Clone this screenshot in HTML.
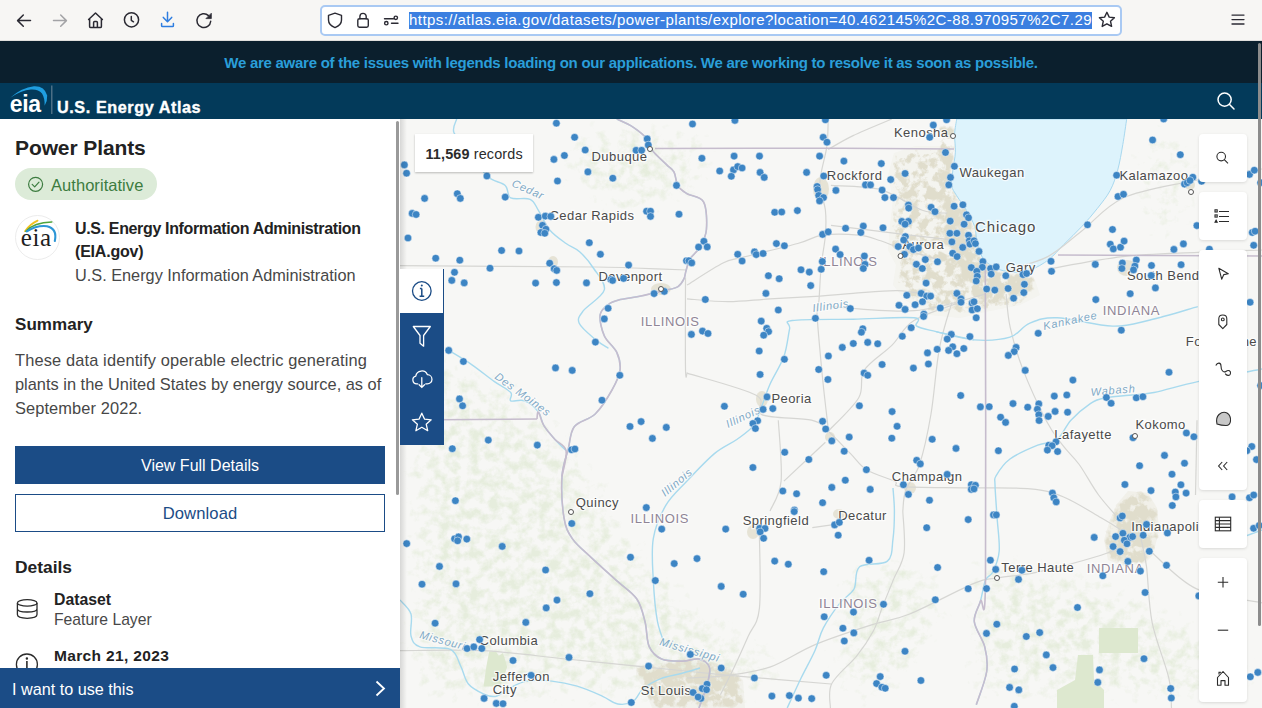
<!DOCTYPE html>
<html><head><meta charset="utf-8">
<style>
*{box-sizing:border-box;margin:0;padding:0}
html,body{width:1262px;height:708px;overflow:hidden;background:#fff;font-family:"Liberation Sans",sans-serif}
.t{position:absolute;white-space:nowrap}
.a{position:absolute}
svg{position:absolute;overflow:visible}
</style></head><body>
<div class="a" style="left:0;top:0;width:1262px;height:41px;background:#f7f6f4"></div><div class="a" style="left:0;top:40px;width:1262px;height:1px;background:#e0dfdd"></div><svg style="left:0;top:0" width="260" height="41" viewBox="0 0 260 41" fill="none" stroke="#2b2a33" stroke-width="1.5" stroke-linecap="round" stroke-linejoin="round">
<path d="M30.5 20.6H17.8M23.3 15L17.6 20.6L23.3 26.2"/>
<path d="M53.5 20.6H66.2M60.7 15L66.4 20.6L60.7 26.2" stroke="#a3a3a6"/>
<path d="M88.6 19.5L95.5 13L102.4 19.5M89.6 18.7V26.4Q89.6 27.6 90.8 27.6H100.2Q101.4 27.6 101.4 26.4V18.7M93.6 27.6V22.4Q93.6 21.4 94.6 21.4H96.4Q97.4 21.4 97.4 22.4V27.6"/>
<circle cx="131.5" cy="19.8" r="7.1"/>
<path d="M131.3 16.4V20.3L133.5 21.8"/>
<path d="M167.5 12.3V21.5M163.3 17.4L167.5 21.7L171.7 17.4M161.6 23.4V25.7Q161.6 26.6 162.5 26.6H172.5Q173.4 26.6 173.4 25.7V23.4" stroke="#2e7de0"/>
<path d="M210.7 21.2A6.9 6.9 0 1 1 208.5 15.6"/>
<path d="M211.3 13.6V18.6H206.3Z" fill="#2b2a33" stroke-width="0.8"/>
</svg><div class="a" style="left:320px;top:5px;width:802px;height:31px;background:#fff;border:2px solid #a9c9f3;border-radius:5px"></div><svg style="left:300px;top:0" width="120" height="41" viewBox="300 0 120 41" fill="none" stroke="#2b2a33" stroke-width="1.4" stroke-linecap="round" stroke-linejoin="round">
<path d="M335 13.2L341.5 15.3V20Q341.5 25 335 27.6Q328.5 25 328.5 20V15.3Z"/>
<rect x="357.8" y="18.7" width="10.5" height="8.5" rx="1.6"/>
<path d="M359.9 18.7V16.5A3.1 3.1 0 0 1 366.2 16.5V18.7"/>
<path d="M393.5 18.8H384.5M391.5 23.3H398"/>
<circle cx="395.8" cy="17.8" r="1.7"/><circle cx="386.3" cy="23.2" r="1.7"/>
</svg><div class="a" style="left:409px;top:12px;width:683px;height:17px;background:#3b7fe0"></div><div class="t" style="left:409px;top:11px;height:18px;font-size:15px;line-height:18px;color:#fff;letter-spacing:0.44px">https://atlas.eia.gov/datasets/power-plants/explore?location=40.462145%2C-88.970957%2C7.29</div><svg style="left:1090px;top:0" width="172" height="41" viewBox="1090 0 172 41" fill="none" stroke="#2b2a33" stroke-width="1.4" stroke-linejoin="round" stroke-linecap="round">
<path d="M1106.9 12.3L1109.2 17.1L1114.4 17.7L1110.5 21.2L1111.6 26.4L1106.9 23.8L1102.2 26.4L1103.3 21.2L1099.4 17.7L1104.6 17.1Z"/>
<path d="M1232 15.1H1244M1232 19.6H1244M1232 24H1244" stroke-width="1.3"/>
</svg><div class="a" style="left:0;top:41px;width:1262px;height:42px;background:#0b1f2d"></div><div class="t" style="left:0px;top:55.10px;font-size:15px;line-height:15px;color:#2a9ed9;font-weight:bold;letter-spacing:-0.265px;width:1262px;text-align:center;">We are aware of the issues with legends loading on our applications. We are working to resolve it as soon as possible.</div>
<div class="a" style="left:0;top:83px;width:1262px;height:36px;background:#033a5a"></div><svg style="left:0;top:83px" width="60" height="36" viewBox="0 83 60 36">
<path d="M10.2 97.8Q22 87.5 33.9 86.3Q44.5 85.8 47.2 95.5Q47.6 100.5 44.6 105.7Q45 98.5 42 93.5Q38.5 89.2 31 89.6Q21 90.5 10.2 97.8Z" fill="#1f9ee0"/>
<rect x="51.2" y="85.5" width="1.2" height="28.5" fill="#5f7d91"/>
</svg><div class="t" style="left:9.8px;top:93.33px;font-size:23px;line-height:23px;color:#fff;font-weight:bold;letter-spacing:-0.4px;">eia</div>
<div class="t" style="left:57px;top:99.19px;font-size:16.2px;line-height:16.2px;color:#fff;font-weight:bold;letter-spacing:0.58px;-webkit-text-stroke:0.35px #fff;">U.S. Energy Atlas</div>
<svg style="left:1210px;top:86px" width="30" height="30" viewBox="1210 86 30 30" fill="none" stroke="#fff" stroke-width="1.5">
<circle cx="1224.6" cy="99.6" r="6.6"/><path d="M1229.3 104.3L1234 109" stroke-linecap="round"/>
</svg><svg style="left:400px;top:119px" width="862" height="589" viewBox="400 119 862 589" font-family="Liberation Sans, sans-serif"><defs><clipPath id="mc"><rect x="400" y="119" width="862" height="589"/></clipPath></defs><g clip-path="url(#mc)"><defs>
<filter id="speck" x="400" y="119" width="862" height="589" filterUnits="userSpaceOnUse" color-interpolation-filters="sRGB">
<feTurbulence type="fractalNoise" baseFrequency="0.11" numOctaves="4" seed="7" result="n"/>
<feColorMatrix in="n" type="matrix" values="0 0 0 0 0  0 0 0 0 0  0 0 0 0 0  1 0 0 0 0" result="na"/>
<feGaussianBlur in="SourceAlpha" stdDeviation="6" result="m"/>
<feComposite in="na" in2="m" operator="arithmetic" k1="1" k2="0" k3="0" k4="0" result="nm"/>
<feComponentTransfer in="nm" result="t"><feFuncA type="linear" slope="6" intercept="-2.5"/></feComponentTransfer>
<feFlood flood-color="#e0ddcc"/>
<feComposite in2="t" operator="in"/>
</filter>
<filter id="speck2" x="400" y="119" width="862" height="589" filterUnits="userSpaceOnUse" color-interpolation-filters="sRGB">
<feTurbulence type="fractalNoise" baseFrequency="0.11" numOctaves="4" seed="3" result="n"/>
<feColorMatrix in="n" type="matrix" values="0 0 0 0 0  0 0 0 0 0  0 0 0 0 0  1 0 0 0 0" result="na"/>
<feGaussianBlur in="SourceAlpha" stdDeviation="5" result="m"/>
<feComposite in="na" in2="m" operator="arithmetic" k1="1" k2="0" k3="0" k4="0" result="nm"/>
<feComponentTransfer in="nm" result="t"><feFuncA type="linear" slope="6" intercept="-1.7"/></feComponentTransfer>
<feFlood flood-color="#e0ddcc"/>
<feComposite in2="t" operator="in"/>
</filter>
<filter id="gtex" filterUnits="userSpaceOnUse" x="400" y="119" width="862" height="589" color-interpolation-filters="sRGB">
<feTurbulence type="fractalNoise" baseFrequency="0.1" numOctaves="4" seed="11" result="n"/>
<feColorMatrix in="n" type="matrix" values="0 0 0 0 0  0 0 0 0 0  0 0 0 0 0  1 0 0 0 0" result="na"/>
<feGaussianBlur in="SourceAlpha" stdDeviation="25" result="m"/>
<feComposite in="na" in2="m" operator="arithmetic" k1="1" k2="0" k3="0" k4="0" result="nm"/>
<feComponentTransfer in="nm" result="t"><feFuncA type="linear" slope="3" intercept="-1.15"/></feComponentTransfer>
<feFlood flood-color="#e6eddd"/>
<feComposite in2="t" operator="in"/>
</filter>
</defs>
<rect x="400" y="119" width="862" height="589" fill="#f7f7f5"/>
<polygon points="400.0,330.0 520.0,380.0 560.0,420.0 600.0,460.0 640.0,540.0 700.0,600.0 780.0,640.0 800.0,708.0 400.0,708.0" fill="#000" filter="url(#gtex)"/>
<polygon points="960.0,540.0 1060.0,560.0 1130.0,580.0 1200.0,620.0 1262.0,640.0 1262.0,708.0 960.0,708.0" fill="#000" filter="url(#gtex)"/>
<polygon points="550.0,119.0 720.0,119.0 720.0,200.0 620.0,230.0 550.0,180.0" fill="#000" filter="url(#gtex)"/>
<polygon points="830.0,560.0 930.0,540.0 960.0,620.0 900.0,708.0 820.0,708.0" fill="#000" filter="url(#gtex)"/>
<polygon points="1130.0,119.0 1197.0,119.0 1197.0,260.0 1130.0,240.0" fill="#000" filter="url(#gtex)"/>
<polygon points="1099.0,628.0 1138.0,628.0 1138.0,653.0 1099.0,653.0" fill="#dde8cf"/>
<polygon points="1078.0,655.0 1093.0,655.0 1094.0,680.0 1104.0,690.0 1104.0,708.0 1057.0,708.0 1057.0,690.0 1075.0,680.0" fill="#dde8cf"/>
<polygon points="489.1,651.6 496.0,651.6 498.8,655.8 503.0,653.0 507.2,666.9 500.2,686.4 483.5,686.4 486.3,666.9" fill="#dde8cf"/>
<polygon points="894.0,153.0 915.0,146.0 952.0,146.0 954.0,160.0 952.0,185.0 957.0,196.0 967.0,211.0 975.0,226.0 978.0,242.0 983.0,257.0 990.0,265.0 1000.0,270.0 1015.0,273.0 1035.0,280.0 1040.0,295.0 1020.0,305.0 985.0,312.0 960.0,318.0 930.0,315.0 905.0,300.0 893.0,285.0 896.0,265.0 888.0,250.0 890.0,225.0 893.0,200.0 888.0,175.0" fill="#dedac8" opacity="0.12"/>
<polygon points="894.0,153.0 915.0,146.0 952.0,146.0 954.0,160.0 952.0,185.0 957.0,196.0 967.0,211.0 975.0,226.0 978.0,242.0 983.0,257.0 990.0,265.0 1000.0,270.0 1015.0,273.0 1035.0,280.0 1040.0,295.0 1020.0,305.0 985.0,312.0 960.0,318.0 930.0,315.0 905.0,300.0 893.0,285.0 896.0,265.0 888.0,250.0 890.0,225.0 893.0,200.0 888.0,175.0" fill="#000" filter="url(#speck)"/>
<polygon points="940.0,122.0 954.0,122.0 955.0,150.0 952.0,185.0 957.0,196.0 967.0,211.0 975.0,226.0 978.0,242.0 983.0,257.0 992.0,266.0 1005.0,272.0 1030.0,273.0 1038.0,285.0 1030.0,298.0 1000.0,303.0 975.0,298.0 958.0,282.0 948.0,258.0 942.0,228.0 940.0,195.0 938.0,160.0" fill="#000" filter="url(#speck2)"/>
<polygon points="1128.0,491.0 1148.0,493.0 1157.0,508.0 1159.0,530.0 1153.0,555.0 1145.0,563.0 1125.0,566.0 1108.0,560.0 1104.0,540.0 1110.0,520.0 1117.0,504.0" fill="#dedac8" opacity="0.25"/>
<polygon points="1128.0,491.0 1148.0,493.0 1157.0,508.0 1159.0,530.0 1153.0,555.0 1145.0,563.0 1125.0,566.0 1108.0,560.0 1104.0,540.0 1110.0,520.0 1117.0,504.0" fill="#000" filter="url(#speck2)"/>
<polygon points="636.0,666.0 654.1,664.0 672.9,661.0 685.5,657.0 698.0,658.0 712.0,662.0 730.0,668.0 743.0,680.0 745.0,708.0 652.0,708.0 645.0,689.7 636.0,677.1" fill="#dedac8" opacity="0.2"/>
<polygon points="636.0,666.0 654.1,664.0 672.9,661.0 685.5,657.0 698.0,658.0 712.0,662.0 730.0,668.0 743.0,680.0 745.0,708.0 652.0,708.0 645.0,689.7 636.0,677.1" fill="#000" filter="url(#speck2)"/>
<ellipse cx="762" cy="399" rx="6" ry="8" fill="#dedac8" opacity="0.7"/>
<ellipse cx="830" cy="437" rx="5" ry="5" fill="#dedac8" opacity="0.7"/>
<ellipse cx="839" cy="514" rx="6" ry="5" fill="#dedac8" opacity="0.7"/>
<ellipse cx="753" cy="532" rx="6" ry="7" fill="#dedac8" opacity="0.7"/>
<ellipse cx="910" cy="488" rx="6" ry="6" fill="#dedac8" opacity="0.7"/>
<ellipse cx="821" cy="189" rx="8" ry="12" fill="#dedac8" opacity="0.7"/>
<ellipse cx="1127" cy="268" rx="10" ry="8" fill="#dedac8" opacity="0.7"/>
<ellipse cx="661" cy="289" rx="10" ry="6" fill="#dedac8" opacity="0.7"/>
<ellipse cx="553" cy="262" rx="5" ry="6" fill="#dedac8" opacity="0.7"/>
<ellipse cx="541.5" cy="227" rx="6" ry="7" fill="#dedac8" opacity="0.7"/>
<ellipse cx="1190" cy="185" rx="5" ry="5" fill="#dedac8" opacity="0.7"/>
<path d="M956.7,119.0 C956.4,121.5 954.8,128.8 954.6,134.3 C954.4,139.8 955.7,146.2 955.4,152.2 C955.1,158.2 953.5,164.5 952.9,170.1 C952.3,175.7 951.0,181.2 951.6,185.5 C952.2,189.8 954.2,191.4 956.7,195.7 C959.2,199.9 963.9,205.9 966.9,211.0 C969.9,216.1 972.9,221.3 974.6,226.4 C976.3,231.5 975.8,236.6 977.1,241.7 C978.4,246.8 980.1,253.2 982.2,257.0 C984.3,260.8 986.9,262.6 989.9,264.7 C992.9,266.8 995.8,268.5 1000.1,269.8 C1004.4,271.1 1010.4,272.4 1015.5,272.4 C1020.6,272.4 1025.3,271.9 1030.8,269.8 C1036.3,267.7 1043.2,263.9 1048.7,259.6 C1054.2,255.4 1058.5,249.8 1064.0,244.3 C1069.5,238.8 1076.4,232.4 1081.9,226.4 C1087.5,220.4 1092.6,214.5 1097.3,208.5 C1102.0,202.5 1106.7,197.0 1110.1,190.6 C1113.5,184.2 1115.6,177.8 1117.7,170.1 C1119.8,162.4 1121.3,153.1 1122.8,144.6 C1124.3,136.1 1126.0,123.3 1126.7,119.0 Z" fill="#ddf3fc" stroke="#a8d8ef" stroke-width="1"/>
<path d="M400.0,265.7 C432.6,265.9 557.0,266.6 595.9,267.0 C634.8,267.4 618.2,267.5 633.4,268.0 C648.6,268.5 678.1,269.7 687.0,270.0" fill="none" stroke="#d6d6d3" stroke-width="1.2"/>
<path d="M687.0,285.1 C693.0,281.4 713.8,267.6 723.0,263.0 C732.2,258.4 729.9,260.6 742.4,257.4 C754.9,254.1 784.3,247.2 797.7,243.5 C811.1,239.8 812.5,236.6 822.6,235.2 C832.8,233.8 848.9,234.3 858.6,235.2 C868.3,236.1 873.3,238.5 880.7,240.8 C888.1,243.1 893.0,245.9 902.9,249.1 C912.8,252.3 933.8,258.2 940.0,260.0" fill="none" stroke="#d6d6d3" stroke-width="1.2"/>
<path d="M687.0,298.9 C693.9,299.4 714.7,301.7 728.5,301.7 C742.3,301.7 754.8,299.8 770.0,298.9 C785.2,298.0 806.0,297.0 819.9,296.1 C833.8,295.2 840.2,294.3 853.1,293.4 C866.0,292.5 884.6,290.3 897.4,290.6 C910.2,290.9 924.6,294.3 930.0,295.0" fill="none" stroke="#d6d6d3" stroke-width="1.2"/>
<path d="M685.5,277.4 C685.5,292.7 685.2,353.2 685.5,369.1 C685.8,385.0 686.8,372.4 687.0,373.0" fill="none" stroke="#d6d6d3" stroke-width="1.2"/>
<path d="M828.2,119.0 C828.0,123.6 828.2,136.1 826.8,146.7 C825.4,157.3 820.1,172.1 819.9,182.7 C819.7,193.3 824.5,201.6 825.4,210.3 C826.3,219.1 826.1,226.0 825.4,235.2 C824.7,244.4 822.3,254.9 821.2,265.7 C820.1,276.5 819.7,291.8 819.0,300.0 C818.3,308.2 816.5,301.9 817.1,315.0 C817.7,328.1 820.8,359.8 822.6,378.7 C824.5,397.6 827.3,420.2 828.2,428.5" fill="none" stroke="#d6d6d3" stroke-width="1.2"/>
<path d="M828.2,149.4 C832.4,147.1 842.5,140.7 853.1,135.6 C863.7,130.5 885.3,121.8 891.8,119.0" fill="none" stroke="#d6d6d3" stroke-width="1.2"/>
<path d="M830.9,185.4 C839.2,186.1 865.5,185.4 880.7,189.6 C895.9,193.8 911.2,206.4 922.3,210.3 C933.4,214.2 943.1,212.6 947.2,213.1" fill="none" stroke="#d6d6d3" stroke-width="1.2"/>
<path d="M831.0,225.3 C842.1,226.7 877.6,231.2 897.7,233.6 C917.9,236.0 942.9,238.8 951.9,239.9" fill="none" stroke="#d6d6d3" stroke-width="1.2"/>
<path d="M831.0,306.6 C844.9,307.3 888.7,312.8 914.4,310.7 C940.1,308.6 973.4,296.9 985.2,294.1" fill="none" stroke="#d6d6d3" stroke-width="1.2"/>
<path d="M1010.2,269.1 C1016.5,267.0 1036.0,262.9 1047.8,256.6 C1059.6,250.3 1068.6,241.2 1081.1,231.5 C1093.6,221.8 1104.7,206.5 1122.8,198.2 C1140.9,189.9 1166.3,186.4 1189.5,181.5 C1212.7,176.6 1249.9,171.1 1262.0,169.0" fill="none" stroke="#d6d6d3" stroke-width="1.2"/>
<path d="M1047.8,269.1 C1060.3,267.0 1097.8,259.4 1122.8,256.6 C1147.8,253.8 1174.6,253.5 1197.8,252.4 C1221.0,251.3 1251.3,250.4 1262.0,250.0" fill="none" stroke="#d6d6d3" stroke-width="1.2"/>
<path d="M1006.1,294.1 C1006.8,299.7 1007.4,314.9 1010.2,327.4 C1013.0,339.9 1016.8,353.6 1022.8,369.1 C1028.8,384.6 1039.4,407.5 1046.0,420.2 C1052.6,432.9 1057.1,437.8 1062.6,445.2 C1068.1,452.6 1073.2,456.2 1079.2,464.5 C1085.2,472.8 1091.5,485.4 1098.6,495.0 C1105.7,504.6 1117.8,517.5 1121.7,522.0" fill="none" stroke="#d6d6d3" stroke-width="1.2"/>
<path d="M951.9,302.4 C949.8,310.0 942.9,329.7 939.4,348.3 C935.9,366.9 934.3,394.6 931.0,414.0 C927.7,433.4 923.7,451.8 919.5,464.5 C915.3,477.2 908.6,482.2 905.8,490.0 C903.0,497.8 903.3,507.5 902.8,511.0" fill="none" stroke="#d6d6d3" stroke-width="1.2"/>
<path d="M687.0,373.1 C698.5,376.8 743.8,388.4 756.2,395.3 C768.7,402.2 752.5,410.5 761.7,414.6 C770.9,418.8 800.4,417.4 811.5,420.2 C822.6,423.0 821.7,425.7 828.2,431.2 C834.7,436.7 843.8,446.9 850.3,453.4 C856.8,459.9 859.5,465.4 866.9,470.0 C874.3,474.6 888.8,478.3 894.6,481.1 C900.4,483.9 889.4,485.6 901.6,486.7 C913.8,487.8 946.5,487.5 968.0,487.9 C989.5,488.2 1014.4,487.3 1030.3,488.8 C1046.2,490.3 1051.8,492.2 1063.6,497.0 C1075.4,501.8 1091.3,512.2 1101.0,517.8 C1110.7,523.3 1118.2,528.2 1121.7,530.3" fill="none" stroke="#d6d6d3" stroke-width="1.2"/>
<path d="M828.2,431.2 C833.3,425.7 852.6,408.1 858.6,398.0 C864.6,387.9 858.6,379.2 864.1,370.4 C869.6,361.6 883.5,353.7 891.8,345.4 C900.1,337.1 902.6,327.7 914.0,320.5 C925.4,313.3 952.5,305.4 960.2,302.4" fill="none" stroke="#d6d6d3" stroke-width="1.2"/>
<path d="M778.3,420.2 C778.8,430.4 782.5,466.0 781.1,481.1 C779.7,496.2 771.9,506.0 770.0,511.0" fill="none" stroke="#d6d6d3" stroke-width="1.2"/>
<path d="M825.4,442.3 L783.9,481.1" fill="none" stroke="#d6d6d3" stroke-width="1.2"/>
<path d="M902.8,511.0 C903.0,518.0 905.7,541.2 904.1,552.8 C902.5,564.4 896.7,571.3 893.0,580.6 C889.3,589.9 885.1,600.0 881.9,608.4 C878.6,616.8 877.7,622.8 873.5,630.7 C869.3,638.6 863.8,647.0 856.8,655.8 C849.8,664.6 836.2,674.9 831.8,683.6 C827.4,692.3 830.6,703.9 830.4,708.0" fill="none" stroke="#d6d6d3" stroke-width="1.2"/>
<path d="M759.4,533.3 C759.4,545.8 761.3,591.2 759.4,608.4 C757.5,625.6 752.4,626.5 748.2,636.3 C744.0,646.0 738.9,657.2 734.3,666.9 C729.7,676.6 722.7,690.1 720.4,694.7" fill="none" stroke="#d6d6d3" stroke-width="1.2"/>
<path d="M687.0,678.0 C694.0,677.5 714.9,677.1 728.8,675.3 C742.7,673.4 756.1,672.0 770.5,666.9 C784.9,661.8 798.4,651.6 815.1,644.6 C831.8,637.6 854.9,630.2 870.7,625.1 C886.5,620.0 892.5,621.0 909.7,614.0 C926.9,607.0 959.4,589.4 974.0,583.4 C988.6,577.4 986.3,579.9 997.1,578.0 C1007.9,576.1 1021.3,575.6 1038.6,571.8 C1055.9,568.0 1087.2,559.4 1101.0,555.2 C1114.8,551.1 1118.2,548.3 1121.7,546.9" fill="none" stroke="#d6d6d3" stroke-width="1.2"/>
<path d="M812.3,527.7 L831.8,524.9" fill="none" stroke="#d6d6d3" stroke-width="1.2"/>
<path d="M400.0,650.7 C413.8,650.7 455.3,649.3 483.0,650.7 C510.7,652.1 538.3,656.2 566.0,659.0 C593.7,661.8 628.2,665.2 649.0,667.3 C669.8,669.4 676.8,670.1 690.7,671.5 C704.6,672.9 708.8,673.5 732.2,675.6 C755.6,677.7 814.5,682.6 831.0,684.0" fill="none" stroke="#d6d6d3" stroke-width="1.2"/>
<path d="M1141.0,538.8 C1141.9,543.4 1144.7,552.7 1146.5,566.6 C1148.3,580.5 1148.4,603.7 1152.1,622.3 C1155.8,640.9 1165.6,663.7 1168.8,678.0 C1172.0,692.3 1171.0,703.0 1171.5,708.0" fill="none" stroke="#d6d6d3" stroke-width="1.2"/>
<path d="M1152.1,552.7 C1159.5,558.7 1178.3,580.5 1196.6,588.9 C1214.9,597.2 1251.1,600.5 1262.0,602.8" fill="none" stroke="#d6d6d3" stroke-width="1.2"/>
<path d="M1197.0,420.2 L1195.5,495.0" fill="none" stroke="#d6d6d3" stroke-width="1.2"/>
<path d="M616.8,119.0 C619.6,120.4 628.2,123.8 633.4,127.3 C638.6,130.8 644.9,136.0 648.0,139.8 C651.1,143.6 649.1,146.1 652.2,150.3 C655.3,154.5 663.2,161.3 666.8,164.9 C670.4,168.5 672.1,168.5 674.0,172.0 C675.9,175.5 675.8,182.4 678.0,186.0 C680.2,189.6 682.7,191.0 687.0,193.7 C691.3,196.4 700.4,196.0 703.6,202.0 C706.8,208.0 707.0,222.2 706.4,229.7 C705.8,237.2 702.7,242.1 700.0,247.0 C697.3,251.9 692.3,255.0 690.0,259.0 C687.7,263.0 687.0,267.5 686.0,270.8 C685.0,274.1 685.3,276.1 684.0,278.7 C682.7,281.3 681.3,284.6 678.0,286.6 C674.7,288.6 670.8,289.0 664.2,290.6 C657.6,292.2 646.1,294.9 638.5,296.5 C630.9,298.1 623.7,298.7 618.7,300.0 C613.7,301.3 611.5,302.0 608.4,304.5 C605.3,307.0 600.8,309.7 600.1,314.9 C599.4,320.1 601.5,329.6 604.3,335.8 C607.1,342.1 614.2,346.6 616.8,352.4 C619.4,358.2 620.8,364.1 620.0,370.4 C619.2,376.7 616.1,382.7 612.0,390.0 C607.9,397.3 601.5,407.9 595.2,414.0 C588.9,420.1 578.9,420.6 574.4,426.5 C569.9,432.4 570.3,441.0 568.2,449.3 C566.1,457.6 562.7,464.9 562.0,476.3 C561.3,487.7 562.3,507.4 564.0,517.8 C565.7,528.2 567.8,532.0 572.3,538.6 C576.8,545.2 583.7,550.4 591.0,557.3 C598.3,564.2 608.4,573.2 616.0,580.1 C623.6,587.0 631.9,591.9 636.7,598.8 C641.5,605.7 642.9,613.6 645.0,621.6 C647.1,629.6 646.4,640.4 649.2,646.6 C652.0,652.8 656.1,656.6 661.6,659.0 C667.1,661.4 676.2,661.1 682.4,661.1 C688.6,661.1 694.5,658.0 699.0,659.0 C703.5,660.0 708.0,663.1 709.4,667.3 C710.8,671.5 709.0,677.2 707.3,684.0 C705.6,690.8 700.4,704.0 699.0,708.0" fill="none" stroke="#a8daee" stroke-width="1.4"/>
<path d="M974.0,339.9 C967.7,338.5 945.6,333.9 936.1,331.6 C926.6,329.3 920.4,328.4 916.7,326.1 C913.0,323.8 924.6,319.0 914.0,317.8 C903.4,316.6 873.4,318.8 853.1,319.2 C832.8,319.6 802.8,318.9 792.2,320.5 C781.6,322.1 791.0,322.8 789.6,328.8 C788.2,334.8 787.2,347.3 783.9,356.5 C780.6,365.7 773.7,375.9 770.0,384.2 C766.3,392.5 764.5,399.4 761.7,406.3 C758.9,413.2 757.5,420.2 753.4,425.7 C749.2,431.2 743.2,434.9 736.8,439.5 C730.3,444.1 723.0,446.5 714.7,453.4 C706.4,460.3 695.1,472.4 687.0,481.1 C678.9,489.8 671.4,495.8 665.8,505.4 C660.2,515.0 655.4,526.1 653.3,538.6 C651.2,551.1 652.6,566.3 653.3,580.1 C654.0,593.9 655.4,610.5 657.5,621.6 C659.6,632.7 664.4,642.4 665.8,646.6" fill="none" stroke="#a8daee" stroke-width="1.4"/>
<path d="M400.0,600.0 C401.8,602.3 409.2,608.0 411.0,614.0 C412.8,620.0 409.5,630.5 411.0,636.0 C412.5,641.5 413.4,644.7 420.0,646.9 C426.6,649.1 443.6,646.2 450.4,649.4 C457.2,652.6 457.6,660.2 460.6,665.9 C463.6,671.6 464.4,679.1 468.2,683.7 C472.0,688.4 478.8,691.7 483.4,693.8 C488.0,695.9 491.9,697.1 496.1,696.3 C500.3,695.4 503.6,691.2 508.7,688.7 C513.8,686.2 519.3,682.4 526.5,681.1 C533.7,679.8 543.3,680.2 551.8,681.1 C560.2,682.0 568.7,683.7 577.2,686.2 C585.7,688.7 595.8,693.3 602.6,696.3 C609.4,699.3 612.7,703.1 617.8,704.0 C622.9,704.9 628.8,703.9 633.0,701.4 C637.2,698.9 638.5,692.5 643.1,688.7 C647.8,684.9 654.5,681.1 660.9,678.6 C667.2,676.1 674.7,675.3 681.2,673.5 C687.7,671.7 696.9,668.9 700.0,668.0" fill="none" stroke="#a8daee" stroke-width="1.4"/>
<path d="M448.7,350.4 C452.6,352.8 464.4,359.6 472.0,364.8 C479.6,370.0 487.7,376.8 494.1,381.4 C500.6,386.0 507.9,389.3 510.7,392.5 C513.5,395.7 508.4,399.4 510.7,400.8 C513.0,402.2 519.9,399.0 524.5,400.8 C529.1,402.6 535.2,407.8 538.4,411.9 C541.6,416.0 541.1,421.1 543.9,425.7 C546.7,430.3 551.3,435.4 555.0,439.5 C558.7,443.6 564.2,448.8 566.1,450.6" fill="none" stroke="#a8daee" stroke-width="1.4"/>
<path d="M456.7,119.0 C456.2,121.3 451.8,127.6 454.0,132.8 C456.2,138.0 464.5,142.8 470.0,150.0 C475.5,157.2 481.0,170.1 486.9,176.0 C492.8,181.9 501.2,181.8 505.2,185.4 C509.2,189.1 506.5,195.6 510.7,197.9 C514.9,200.2 525.5,197.2 530.1,199.3 C534.7,201.4 535.2,205.2 538.4,210.3 C541.6,215.4 544.9,224.2 549.5,229.7 C554.1,235.2 561.0,239.8 566.1,243.5 C571.2,247.2 575.3,247.7 579.9,251.9 C584.5,256.1 589.6,262.2 593.7,268.5 C597.8,274.8 606.0,282.9 604.3,289.9 C602.6,296.9 587.6,305.1 583.4,310.7 C579.2,316.3 577.1,318.4 579.2,323.3 C581.3,328.2 591.0,335.7 595.9,339.9 C600.8,344.1 606.3,346.9 608.4,348.3" fill="none" stroke="#a8daee" stroke-width="1.4"/>
<path d="M893.0,488.0 C893.2,491.8 894.4,502.5 894.4,511.0 C894.4,519.5 894.2,530.4 893.0,538.8 C891.8,547.1 893.0,556.5 887.4,561.1 C881.8,565.8 865.2,562.1 859.6,566.7 C854.0,571.4 857.2,583.0 854.0,589.0 C850.8,595.0 845.2,596.4 840.1,602.9 C835.0,609.4 827.6,620.0 823.4,627.9 C819.2,635.8 818.8,641.9 815.1,650.2 C811.4,658.6 805.8,668.4 801.1,678.0 C796.5,687.6 789.5,703.0 787.2,708.0" fill="none" stroke="#a8daee" stroke-width="1.4"/>
<path d="M936.1,331.6 C942.4,333.0 961.7,339.0 974.0,339.9 C986.3,340.8 1000.8,340.0 1010.0,337.2 C1019.2,334.4 1021.6,326.5 1029.4,323.3 C1037.2,320.1 1043.2,317.3 1057.1,317.8 C1070.9,318.3 1097.0,325.7 1112.5,326.1 C1128.0,326.5 1135.8,323.2 1150.0,320.0 C1164.2,316.8 1189.8,308.8 1197.8,306.6" fill="none" stroke="#a8daee" stroke-width="1.4"/>
<path d="M1262.0,369.0 C1251.3,371.1 1215.8,377.7 1197.8,381.6 C1179.8,385.5 1165.5,390.2 1154.0,392.5 C1142.5,394.8 1137.4,394.4 1129.1,395.3 C1120.8,396.2 1110.7,396.7 1104.2,398.1 C1097.7,399.5 1095.8,399.9 1090.3,403.6 C1084.8,407.3 1076.4,414.2 1070.9,420.2 C1065.4,426.2 1062.6,435.4 1057.1,439.6 C1051.6,443.8 1045.5,442.0 1037.7,445.2 C1029.9,448.4 1016.9,453.9 1010.0,459.0 C1003.1,464.1 998.7,471.3 996.2,475.6 C993.7,479.9 994.9,477.6 995.0,484.6 C995.1,491.6 996.4,506.7 997.1,517.8 C997.8,528.9 999.9,542.0 999.2,551.0 C998.5,560.0 995.3,566.9 993.0,571.8 C990.7,576.6 987.6,575.2 985.5,580.1 C983.4,585.0 982.4,594.1 980.5,601.0 C978.6,607.9 973.6,614.0 974.3,621.6 C975.0,629.2 982.6,638.3 984.7,646.6 C986.8,654.9 988.1,661.8 986.7,671.5 C985.3,681.2 978.0,699.2 976.3,704.7" fill="none" stroke="#a8daee" stroke-width="1.4"/>
<path d="M1235.0,540.0 L1262.0,530.0" fill="none" stroke="#a8daee" stroke-width="1.4"/>
<path d="M616.8,119.0 C619.6,120.4 628.2,123.8 633.4,127.3 C638.6,130.8 644.9,136.0 648.0,139.8 C651.1,143.6 649.1,146.1 652.2,150.3 C655.3,154.5 663.2,161.3 666.8,164.9 C670.4,168.5 672.1,168.5 674.0,172.0 C675.9,175.5 675.8,182.4 678.0,186.0 C680.2,189.6 682.7,191.0 687.0,193.7 C691.3,196.4 700.4,196.0 703.6,202.0 C706.8,208.0 707.0,222.2 706.4,229.7 C705.8,237.2 702.7,242.1 700.0,247.0 C697.3,251.9 692.3,255.0 690.0,259.0 C687.7,263.0 687.0,267.5 686.0,270.8 C685.0,274.1 685.3,276.1 684.0,278.7 C682.7,281.3 681.3,284.6 678.0,286.6 C674.7,288.6 670.8,289.0 664.2,290.6 C657.6,292.2 646.1,294.9 638.5,296.5 C630.9,298.1 623.7,298.7 618.7,300.0 C613.7,301.3 611.5,302.0 608.4,304.5 C605.3,307.0 600.8,309.7 600.1,314.9 C599.4,320.1 601.5,329.6 604.3,335.8 C607.1,342.1 614.2,346.6 616.8,352.4 C619.4,358.2 620.8,364.1 620.0,370.4 C619.2,376.7 616.1,382.7 612.0,390.0 C607.9,397.3 601.5,407.9 595.2,414.0 C588.9,420.1 578.9,420.6 574.4,426.5 C569.9,432.4 570.3,441.0 568.2,449.3 C566.1,457.6 562.7,464.9 562.0,476.3 C561.3,487.7 562.3,507.4 564.0,517.8 C565.7,528.2 567.8,532.0 572.3,538.6 C576.8,545.2 583.7,550.4 591.0,557.3 C598.3,564.2 608.4,573.2 616.0,580.1 C623.6,587.0 631.9,591.9 636.7,598.8 C641.5,605.7 642.9,613.6 645.0,621.6 C647.1,629.6 646.4,640.4 649.2,646.6 C652.0,652.8 656.1,656.6 661.6,659.0 C667.1,661.4 676.2,661.1 682.4,661.1 C688.6,661.1 694.5,658.0 699.0,659.0 C703.5,660.0 708.0,663.1 709.4,667.3 C710.8,671.5 709.0,677.2 707.3,684.0 C705.6,690.8 700.4,704.0 699.0,708.0" fill="none" stroke="#c6bccd" stroke-width="1.6"/>
<path d="M537.0,419.0 C537.2,417.8 537.2,410.8 538.4,411.9 C539.5,413.0 541.1,421.1 543.9,425.7 C546.7,430.3 551.3,435.4 555.0,439.5 C558.7,443.6 564.9,444.5 566.1,450.6 C567.3,456.7 562.7,472.0 562.0,476.3" fill="none" stroke="#c6bccd" stroke-width="1.6"/>
<path d="M655.0,148.5 C684.3,148.4 781.2,148.1 831.0,148.2 C880.8,148.3 933.5,148.9 954.0,149.0" fill="none" stroke="#c6bccd" stroke-width="1.6"/>
<path d="M1058.0,255.0 L1262.0,256.0" fill="none" stroke="#c6bccd" stroke-width="1.6"/>
<path d="M985.3,264.0 C985.3,316.7 986.3,523.9 985.5,580.1 C984.7,636.3 982.4,594.1 980.5,601.0 C978.6,607.9 973.6,614.0 974.3,621.6 C975.0,629.2 982.6,638.3 984.7,646.6 C986.8,654.9 988.1,661.8 986.7,671.5 C985.3,681.2 978.0,699.2 976.3,704.7" fill="none" stroke="#c6bccd" stroke-width="1.6"/>
<path d="M400.0,420.0 L537.0,419.0" fill="none" stroke="#c6bccd" stroke-width="1.6"/>
<text x="591.5" y="160.5" font-size="13" fill="#4a4a4a" letter-spacing="0.45" font-weight="normal" stroke="#fff" stroke-width="2.5" stroke-opacity="0.7" paint-order="stroke" >Dubuque</text>
<text x="549.5" y="220.3" font-size="13" fill="#4a4a4a" letter-spacing="0.45" font-weight="normal" stroke="#fff" stroke-width="2.5" stroke-opacity="0.7" paint-order="stroke" >Cedar Rapids</text>
<text x="598.5" y="281.2" font-size="13" fill="#4a4a4a" letter-spacing="0.45" font-weight="normal" stroke="#fff" stroke-width="2.5" stroke-opacity="0.7" paint-order="stroke" >Davenport</text>
<text x="826.8" y="179.9" font-size="13" fill="#4a4a4a" letter-spacing="0.45" font-weight="normal" stroke="#fff" stroke-width="2.5" stroke-opacity="0.7" paint-order="stroke" >Rockford</text>
<text x="894" y="136.8" font-size="13" fill="#4a4a4a" letter-spacing="0.45" font-weight="normal" stroke="#fff" stroke-width="2.5" stroke-opacity="0.7" paint-order="stroke" >Kenosha</text>
<text x="959.4" y="177" font-size="13" fill="#4a4a4a" letter-spacing="0.45" font-weight="normal" stroke="#fff" stroke-width="2.5" stroke-opacity="0.7" paint-order="stroke" >Waukegan</text>
<text x="902.5" y="249" font-size="13" fill="#4a4a4a" letter-spacing="0.45" font-weight="normal" stroke="#fff" stroke-width="2.5" stroke-opacity="0.7" paint-order="stroke" >Aurora</text>
<text x="1119.4" y="179.9" font-size="13" fill="#4a4a4a" letter-spacing="0.45" font-weight="normal" stroke="#fff" stroke-width="2.5" stroke-opacity="0.7" paint-order="stroke" >Kalamazoo</text>
<text x="1005.8" y="271.6" font-size="13" fill="#4a4a4a" letter-spacing="0.45" font-weight="normal" stroke="#fff" stroke-width="2.5" stroke-opacity="0.7" paint-order="stroke" >Gary</text>
<text x="1127" y="280.4" font-size="13" fill="#4a4a4a" letter-spacing="0.45" font-weight="normal" stroke="#fff" stroke-width="2.5" stroke-opacity="0.7" paint-order="stroke" >South Bend</text>
<text x="771.4" y="402.5" font-size="13" fill="#4a4a4a" letter-spacing="0.45" font-weight="normal" stroke="#fff" stroke-width="2.5" stroke-opacity="0.7" paint-order="stroke" >Peoria</text>
<text x="891.8" y="481" font-size="13" fill="#4a4a4a" letter-spacing="0.45" font-weight="normal" stroke="#fff" stroke-width="2.5" stroke-opacity="0.7" paint-order="stroke" >Champaign</text>
<text x="1054.3" y="439.3" font-size="13" fill="#4a4a4a" letter-spacing="0.45" font-weight="normal" stroke="#fff" stroke-width="2.5" stroke-opacity="0.7" paint-order="stroke" >Lafayette</text>
<text x="1135.4" y="428.8" font-size="13" fill="#4a4a4a" letter-spacing="0.45" font-weight="normal" stroke="#fff" stroke-width="2.5" stroke-opacity="0.7" paint-order="stroke" >Kokomo</text>
<text x="1185.8" y="345.7" font-size="13" fill="#4a4a4a" letter-spacing="0.45" font-weight="normal" stroke="#fff" stroke-width="2.5" stroke-opacity="0.7" paint-order="stroke" >Fort Wayne</text>
<text x="575.8" y="506.5" font-size="13" fill="#4a4a4a" letter-spacing="0.45" font-weight="normal" stroke="#fff" stroke-width="2.5" stroke-opacity="0.7" paint-order="stroke" >Quincy</text>
<text x="742.7" y="524.9" font-size="13" fill="#4a4a4a" letter-spacing="0.45" font-weight="normal" stroke="#fff" stroke-width="2.5" stroke-opacity="0.7" paint-order="stroke" >Springfield</text>
<text x="838.2" y="519.9" font-size="13" fill="#4a4a4a" letter-spacing="0.45" font-weight="normal" stroke="#fff" stroke-width="2.5" stroke-opacity="0.7" paint-order="stroke" >Decatur</text>
<text x="479.6" y="645.2" font-size="13" fill="#4a4a4a" letter-spacing="0.45" font-weight="normal" stroke="#fff" stroke-width="2.5" stroke-opacity="0.7" paint-order="stroke" >Columbia</text>
<text x="492.7" y="680.8" font-size="13" fill="#4a4a4a" letter-spacing="0.45" font-weight="normal" stroke="#fff" stroke-width="2.5" stroke-opacity="0.7" paint-order="stroke" >Jefferson</text>
<text x="492.7" y="694.2" font-size="13" fill="#4a4a4a" letter-spacing="0.45" font-weight="normal" stroke="#fff" stroke-width="2.5" stroke-opacity="0.7" paint-order="stroke" >City</text>
<text x="640.8" y="695.3" font-size="13" fill="#4a4a4a" letter-spacing="0.45" font-weight="normal" stroke="#fff" stroke-width="2.5" stroke-opacity="0.7" paint-order="stroke" >St Louis</text>
<text x="1131.2" y="530.5" font-size="13" fill="#4a4a4a" letter-spacing="0.45" font-weight="normal" stroke="#fff" stroke-width="2.5" stroke-opacity="0.7" paint-order="stroke" >Indianapolis</text>
<text x="1001.3" y="572.2" font-size="13" fill="#4a4a4a" letter-spacing="0.45" font-weight="normal" stroke="#fff" stroke-width="2.5" stroke-opacity="0.7" paint-order="stroke" >Terre Haute</text>
<text x="975.1" y="232" font-size="15" fill="#4a4a4a" letter-spacing="0.85" font-weight="normal" stroke="#fff" stroke-width="2.5" stroke-opacity="0.7" paint-order="stroke" >Chicago</text>
<text x="640.8" y="325.5" font-size="13" fill="#8f8596" letter-spacing="0.65" font-weight="normal" stroke="#fff" stroke-width="2.5" stroke-opacity="0.7" paint-order="stroke" >ILLINOIS</text>
<text x="819" y="265.7" font-size="13" fill="#8f8596" letter-spacing="0.65" font-weight="normal" stroke="#fff" stroke-width="2.5" stroke-opacity="0.7" paint-order="stroke" >ILLINOIS</text>
<text x="630.5" y="522.7" font-size="13" fill="#8f8596" letter-spacing="0.65" font-weight="normal" stroke="#fff" stroke-width="2.5" stroke-opacity="0.7" paint-order="stroke" >ILLINOIS</text>
<text x="819" y="607.9" font-size="13" fill="#8f8596" letter-spacing="0.65" font-weight="normal" stroke="#fff" stroke-width="2.5" stroke-opacity="0.7" paint-order="stroke" >ILLINOIS</text>
<text x="1102.8" y="314.5" font-size="13" fill="#8f8596" letter-spacing="0.65" font-weight="normal" stroke="#fff" stroke-width="2.5" stroke-opacity="0.7" paint-order="stroke" >INDIANA</text>
<text x="1086.7" y="572.8" font-size="13" fill="#8f8596" letter-spacing="0.65" font-weight="normal" stroke="#fff" stroke-width="2.5" stroke-opacity="0.7" paint-order="stroke" >INDIANA</text>
<text x="511" y="186" font-size="11" fill="#7fa9c6" font-style="italic" letter-spacing="0.8" transform="rotate(24 511 186)" stroke="#fff" stroke-width="2" stroke-opacity="0.6" paint-order="stroke">Cedar</text>
<text x="494" y="378" font-size="11" fill="#7fa9c6" font-style="italic" letter-spacing="0.8" transform="rotate(36 494 378)" stroke="#fff" stroke-width="2" stroke-opacity="0.6" paint-order="stroke">Des Moines</text>
<text x="419" y="638" font-size="11" fill="#7fa9c6" font-style="italic" letter-spacing="0.8" transform="rotate(15 419 638)" stroke="#fff" stroke-width="2" stroke-opacity="0.6" paint-order="stroke">Missouri</text>
<text x="659" y="645" font-size="11" fill="#7fa9c6" font-style="italic" letter-spacing="0.8" transform="rotate(16 659 645)" stroke="#fff" stroke-width="2" stroke-opacity="0.6" paint-order="stroke">Mississippi</text>
<text x="728" y="428" font-size="11" fill="#7fa9c6" font-style="italic" letter-spacing="0.8" transform="rotate(-25 728 428)" stroke="#fff" stroke-width="2" stroke-opacity="0.6" paint-order="stroke">Illinois</text>
<text x="813" y="312" font-size="11" fill="#7fa9c6" font-style="italic" letter-spacing="0.8" transform="rotate(-8 813 312)" stroke="#fff" stroke-width="2" stroke-opacity="0.6" paint-order="stroke">Illinois</text>
<text x="1044" y="330" font-size="11" fill="#7fa9c6" font-style="italic" letter-spacing="0.8" transform="rotate(-12 1044 330)" stroke="#fff" stroke-width="2" stroke-opacity="0.6" paint-order="stroke">Kankakee</text>
<text x="1091" y="396" font-size="11" fill="#7fa9c6" font-style="italic" letter-spacing="0.8" transform="rotate(-5 1091 396)" stroke="#fff" stroke-width="2" stroke-opacity="0.6" paint-order="stroke">Wabash</text>
<text x="665" y="497" font-size="11" fill="#7fa9c6" font-style="italic" letter-spacing="0.8" transform="rotate(-40 665 497)" stroke="#fff" stroke-width="2" stroke-opacity="0.6" paint-order="stroke">Illinois</text>
<g fill="#3d85c4" stroke="#ffffff" stroke-width="0.6" stroke-opacity="0.8"><circle cx="556.4" cy="123.2" r="3.8"/><circle cx="574.6" cy="137.3" r="3.8"/><circle cx="585.2" cy="150.0" r="3.8"/><circle cx="564.4" cy="155.5" r="3.8"/><circle cx="553.9" cy="159.4" r="3.8"/><circle cx="647.2" cy="138.9" r="3.8"/><circle cx="648.3" cy="145.0" r="3.8"/><circle cx="636.1" cy="150.3" r="3.8"/><circle cx="641.6" cy="150.3" r="3.8"/><circle cx="404.4" cy="164.9" r="3.8"/><circle cx="406.6" cy="173.2" r="3.8"/><circle cx="486.9" cy="176.0" r="3.8"/><circle cx="587.9" cy="171.9" r="3.8"/><circle cx="612.8" cy="178.2" r="3.8"/><circle cx="557.5" cy="181.0" r="3.8"/><circle cx="676.5" cy="185.4" r="3.8"/><circle cx="424.6" cy="198.4" r="3.8"/><circle cx="457.3" cy="193.7" r="3.8"/><circle cx="460.3" cy="198.4" r="3.8"/><circle cx="505.2" cy="197.1" r="3.8"/><circle cx="412.2" cy="213.4" r="3.8"/><circle cx="416.1" cy="214.5" r="3.8"/><circle cx="646.6" cy="211.2" r="3.8"/><circle cx="650.5" cy="211.2" r="3.8"/><circle cx="650.5" cy="216.4" r="3.8"/><circle cx="679.0" cy="214.2" r="3.8"/><circle cx="538.4" cy="217.3" r="3.8"/><circle cx="545.3" cy="216.1" r="3.8"/><circle cx="550.8" cy="216.4" r="3.8"/><circle cx="542.5" cy="225.3" r="3.8"/><circle cx="545.9" cy="229.2" r="3.8"/><circle cx="540.9" cy="232.5" r="3.8"/><circle cx="544.8" cy="233.3" r="3.8"/><circle cx="408.0" cy="238.0" r="3.8"/><circle cx="589.3" cy="242.7" r="3.8"/><circle cx="600.4" cy="254.3" r="3.8"/><circle cx="501.6" cy="250.5" r="3.8"/><circle cx="519.0" cy="251.0" r="3.8"/><circle cx="435.7" cy="258.2" r="3.8"/><circle cx="459.8" cy="260.2" r="3.8"/><circle cx="490.0" cy="268.2" r="3.8"/><circle cx="549.7" cy="263.2" r="3.8"/><circle cx="554.2" cy="268.7" r="3.8"/><circle cx="556.7" cy="270.4" r="3.8"/><circle cx="628.6" cy="265.1" r="3.8"/><circle cx="686.5" cy="260.7" r="3.8"/><circle cx="454.5" cy="272.3" r="3.8"/><circle cx="451.8" cy="280.4" r="3.8"/><circle cx="464.2" cy="282.9" r="3.8"/><circle cx="535.6" cy="283.1" r="3.8"/><circle cx="556.4" cy="282.6" r="3.8"/><circle cx="586.5" cy="282.9" r="3.8"/><circle cx="610.9" cy="279.5" r="3.8"/><circle cx="612.6" cy="280.4" r="3.8"/><circle cx="623.6" cy="278.4" r="3.8"/><circle cx="654.1" cy="293.6" r="3.8"/><circle cx="664.3" cy="291.4" r="3.8"/><circle cx="608.1" cy="308.3" r="3.8"/><circle cx="692.5" cy="124.0" r="3.8"/><circle cx="734.9" cy="120.4" r="3.8"/><circle cx="825.4" cy="119.8" r="3.8"/><circle cx="933.3" cy="125.1" r="3.8"/><circle cx="946.6" cy="119.8" r="3.8"/><circle cx="823.2" cy="137.3" r="3.8"/><circle cx="827.0" cy="142.2" r="3.8"/><circle cx="929.7" cy="137.3" r="3.8"/><circle cx="701.9" cy="158.3" r="3.8"/><circle cx="734.1" cy="156.1" r="3.8"/><circle cx="759.5" cy="156.1" r="3.8"/><circle cx="819.6" cy="156.1" r="3.8"/><circle cx="843.9" cy="161.1" r="3.8"/><circle cx="881.3" cy="163.6" r="3.8"/><circle cx="945.5" cy="152.5" r="3.8"/><circle cx="954.4" cy="166.3" r="3.8"/><circle cx="719.7" cy="171.0" r="3.8"/><circle cx="733.5" cy="169.9" r="3.8"/><circle cx="737.7" cy="166.6" r="3.8"/><circle cx="742.1" cy="168.0" r="3.8"/><circle cx="731.3" cy="176.3" r="3.8"/><circle cx="760.1" cy="172.4" r="3.8"/><circle cx="764.2" cy="177.4" r="3.8"/><circle cx="806.6" cy="172.4" r="3.8"/><circle cx="823.7" cy="176.0" r="3.8"/><circle cx="905.1" cy="173.5" r="3.8"/><circle cx="890.7" cy="179.6" r="3.8"/><circle cx="950.5" cy="177.4" r="3.8"/><circle cx="948.8" cy="184.9" r="3.8"/><circle cx="817.1" cy="186.5" r="3.8"/><circle cx="817.6" cy="189.6" r="3.8"/><circle cx="835.9" cy="190.4" r="3.8"/><circle cx="865.5" cy="184.9" r="3.8"/><circle cx="870.5" cy="184.9" r="3.8"/><circle cx="882.1" cy="190.1" r="3.8"/><circle cx="818.7" cy="195.4" r="3.8"/><circle cx="823.5" cy="197.6" r="3.8"/><circle cx="819.6" cy="200.9" r="3.8"/><circle cx="884.9" cy="197.6" r="3.8"/><circle cx="893.5" cy="197.6" r="3.8"/><circle cx="774.7" cy="212.3" r="3.8"/><circle cx="781.7" cy="212.0" r="3.8"/><circle cx="797.4" cy="210.6" r="3.8"/><circle cx="908.4" cy="205.1" r="3.8"/><circle cx="908.7" cy="208.1" r="3.8"/><circle cx="931.1" cy="207.3" r="3.8"/><circle cx="935.0" cy="211.7" r="3.8"/><circle cx="954.1" cy="206.2" r="3.8"/><circle cx="962.9" cy="204.8" r="3.8"/><circle cx="966.5" cy="214.8" r="3.8"/><circle cx="968.5" cy="217.8" r="3.8"/><circle cx="964.1" cy="224.2" r="3.8"/><circle cx="950.2" cy="221.1" r="3.8"/><circle cx="901.8" cy="221.4" r="3.8"/><circle cx="908.4" cy="221.4" r="3.8"/><circle cx="905.1" cy="224.2" r="3.8"/><circle cx="845.6" cy="228.3" r="3.8"/><circle cx="863.3" cy="226.1" r="3.8"/><circle cx="860.8" cy="232.5" r="3.8"/><circle cx="883.0" cy="227.8" r="3.8"/><circle cx="822.6" cy="234.4" r="3.8"/><circle cx="828.2" cy="231.9" r="3.8"/><circle cx="949.9" cy="233.3" r="3.8"/><circle cx="956.9" cy="233.3" r="3.8"/><circle cx="968.5" cy="235.2" r="3.8"/><circle cx="969.3" cy="240.8" r="3.8"/><circle cx="969.9" cy="244.1" r="3.8"/><circle cx="905.4" cy="236.6" r="3.8"/><circle cx="903.7" cy="240.0" r="3.8"/><circle cx="951.9" cy="241.9" r="3.8"/><circle cx="962.7" cy="247.4" r="3.8"/><circle cx="703.9" cy="241.3" r="3.8"/><circle cx="698.6" cy="247.1" r="3.8"/><circle cx="707.2" cy="246.9" r="3.8"/><circle cx="776.4" cy="243.6" r="3.8"/><circle cx="784.4" cy="245.8" r="3.8"/><circle cx="898.2" cy="246.6" r="3.8"/><circle cx="909.8" cy="246.6" r="3.8"/><circle cx="913.4" cy="249.6" r="3.8"/><circle cx="918.4" cy="248.0" r="3.8"/><circle cx="835.6" cy="249.1" r="3.8"/><circle cx="840.1" cy="254.6" r="3.8"/><circle cx="864.4" cy="256.0" r="3.8"/><circle cx="754.5" cy="251.9" r="3.8"/><circle cx="756.2" cy="254.6" r="3.8"/><circle cx="763.1" cy="253.5" r="3.8"/><circle cx="737.7" cy="254.3" r="3.8"/><circle cx="742.1" cy="261.0" r="3.8"/><circle cx="904.5" cy="254.3" r="3.8"/><circle cx="952.7" cy="253.2" r="3.8"/><circle cx="957.1" cy="256.6" r="3.8"/><circle cx="688.9" cy="260.7" r="3.8"/><circle cx="691.7" cy="262.9" r="3.8"/><circle cx="822.3" cy="261.5" r="3.8"/><circle cx="865.0" cy="264.3" r="3.8"/><circle cx="863.3" cy="268.5" r="3.8"/><circle cx="821.2" cy="269.3" r="3.8"/><circle cx="925.3" cy="259.6" r="3.8"/><circle cx="937.5" cy="261.8" r="3.8"/><circle cx="916.4" cy="264.3" r="3.8"/><circle cx="922.3" cy="268.5" r="3.8"/><circle cx="971.3" cy="267.6" r="3.8"/><circle cx="801.0" cy="269.8" r="3.8"/><circle cx="809.3" cy="272.1" r="3.8"/><circle cx="768.4" cy="275.7" r="3.8"/><circle cx="779.2" cy="278.7" r="3.8"/><circle cx="810.7" cy="285.6" r="3.8"/><circle cx="926.1" cy="283.1" r="3.8"/><circle cx="765.9" cy="293.4" r="3.8"/><circle cx="906.8" cy="295.3" r="3.8"/><circle cx="921.2" cy="293.4" r="3.8"/><circle cx="926.7" cy="296.1" r="3.8"/><circle cx="930.6" cy="296.1" r="3.8"/><circle cx="956.9" cy="293.4" r="3.8"/><circle cx="961.0" cy="298.9" r="3.8"/><circle cx="705.3" cy="299.5" r="3.8"/><circle cx="922.5" cy="301.7" r="3.8"/><circle cx="961.0" cy="302.2" r="3.8"/><circle cx="972.1" cy="303.1" r="3.8"/><circle cx="778.3" cy="310.0" r="3.8"/><circle cx="850.3" cy="308.6" r="3.8"/><circle cx="899.0" cy="305.3" r="3.8"/><circle cx="905.1" cy="309.4" r="3.8"/><circle cx="915.1" cy="304.7" r="3.8"/><circle cx="940.3" cy="308.0" r="3.8"/><circle cx="923.9" cy="314.1" r="3.8"/><circle cx="972.1" cy="310.0" r="3.8"/><circle cx="1152.6" cy="140.0" r="3.8"/><circle cx="1180.3" cy="154.7" r="3.8"/><circle cx="1163.7" cy="119.0" r="3.8"/><circle cx="1116.6" cy="175.2" r="3.8"/><circle cx="1184.5" cy="184.1" r="3.8"/><circle cx="1187.2" cy="182.7" r="3.8"/><circle cx="1192.8" cy="177.2" r="3.8"/><circle cx="1190.0" cy="180.5" r="3.8"/><circle cx="1201.6" cy="181.3" r="3.8"/><circle cx="1249.5" cy="174.4" r="3.8"/><circle cx="1254.3" cy="170.2" r="3.8"/><circle cx="1260.6" cy="182.7" r="3.8"/><circle cx="1118.0" cy="196.5" r="3.8"/><circle cx="1123.5" cy="194.3" r="3.8"/><circle cx="1087.5" cy="224.8" r="3.8"/><circle cx="1112.5" cy="229.5" r="3.8"/><circle cx="1196.9" cy="225.6" r="3.8"/><circle cx="1252.3" cy="232.5" r="3.8"/><circle cx="1255.1" cy="231.2" r="3.8"/><circle cx="1110.3" cy="244.2" r="3.8"/><circle cx="1113.3" cy="248.9" r="3.8"/><circle cx="1120.5" cy="247.2" r="3.8"/><circle cx="1124.1" cy="241.1" r="3.8"/><circle cx="1173.9" cy="249.4" r="3.8"/><circle cx="1183.4" cy="243.9" r="3.8"/><circle cx="1209.4" cy="249.2" r="3.8"/><circle cx="1253.7" cy="245.3" r="3.8"/><circle cx="974.0" cy="240.8" r="3.8"/><circle cx="975.4" cy="243.6" r="3.8"/><circle cx="979.0" cy="251.4" r="3.8"/><circle cx="1051.0" cy="261.3" r="3.8"/><circle cx="1051.5" cy="271.3" r="3.8"/><circle cx="1095.3" cy="264.4" r="3.8"/><circle cx="1122.4" cy="263.0" r="3.8"/><circle cx="1121.9" cy="268.5" r="3.8"/><circle cx="1136.3" cy="260.0" r="3.8"/><circle cx="1134.9" cy="266.1" r="3.8"/><circle cx="1133.5" cy="269.9" r="3.8"/><circle cx="1151.5" cy="265.5" r="3.8"/><circle cx="1181.1" cy="264.7" r="3.8"/><circle cx="982.9" cy="261.6" r="3.8"/><circle cx="982.3" cy="267.2" r="3.8"/><circle cx="990.6" cy="268.5" r="3.8"/><circle cx="996.2" cy="266.9" r="3.8"/><circle cx="976.8" cy="271.3" r="3.8"/><circle cx="991.2" cy="274.1" r="3.8"/><circle cx="977.3" cy="276.3" r="3.8"/><circle cx="976.2" cy="281.0" r="3.8"/><circle cx="1005.8" cy="275.7" r="3.8"/><circle cx="1023.0" cy="274.6" r="3.8"/><circle cx="1026.6" cy="273.5" r="3.8"/><circle cx="1024.4" cy="284.3" r="3.8"/><circle cx="1023.8" cy="292.6" r="3.8"/><circle cx="986.7" cy="289.0" r="3.8"/><circle cx="994.8" cy="290.1" r="3.8"/><circle cx="1008.1" cy="288.5" r="3.8"/><circle cx="1013.6" cy="298.2" r="3.8"/><circle cx="1151.2" cy="275.5" r="3.8"/><circle cx="1155.4" cy="287.9" r="3.8"/><circle cx="1130.2" cy="293.7" r="3.8"/><circle cx="1095.8" cy="299.6" r="3.8"/><circle cx="974.0" cy="301.8" r="3.8"/><circle cx="977.3" cy="308.7" r="3.8"/><circle cx="1250.1" cy="302.3" r="3.8"/><circle cx="604.3" cy="318.9" r="3.8"/><circle cx="595.4" cy="342.1" r="3.8"/><circle cx="448.7" cy="350.4" r="3.8"/><circle cx="463.4" cy="361.5" r="3.8"/><circle cx="555.5" cy="367.9" r="3.8"/><circle cx="572.2" cy="370.4" r="3.8"/><circle cx="619.8" cy="375.3" r="3.8"/><circle cx="459.5" cy="398.9" r="3.8"/><circle cx="462.6" cy="405.8" r="3.8"/><circle cx="602.0" cy="400.2" r="3.8"/><circle cx="630.0" cy="426.5" r="3.8"/><circle cx="641.1" cy="421.6" r="3.8"/><circle cx="666.3" cy="427.4" r="3.8"/><circle cx="652.4" cy="438.4" r="3.8"/><circle cx="488.3" cy="440.1" r="3.8"/><circle cx="537.3" cy="445.1" r="3.8"/><circle cx="452.3" cy="448.7" r="3.8"/><circle cx="571.6" cy="449.8" r="3.8"/><circle cx="574.9" cy="449.0" r="3.8"/><circle cx="455.4" cy="500.7" r="3.8"/><circle cx="646.3" cy="507.6" r="3.8"/><circle cx="761.2" cy="321.1" r="3.8"/><circle cx="815.4" cy="318.3" r="3.8"/><circle cx="923.6" cy="316.4" r="3.8"/><circle cx="969.9" cy="336.6" r="3.8"/><circle cx="691.4" cy="334.4" r="3.8"/><circle cx="702.5" cy="331.1" r="3.8"/><circle cx="708.0" cy="333.5" r="3.8"/><circle cx="766.7" cy="328.3" r="3.8"/><circle cx="768.6" cy="331.6" r="3.8"/><circle cx="763.7" cy="335.2" r="3.8"/><circle cx="862.8" cy="328.8" r="3.8"/><circle cx="861.4" cy="332.2" r="3.8"/><circle cx="911.2" cy="327.7" r="3.8"/><circle cx="902.3" cy="336.3" r="3.8"/><circle cx="951.3" cy="334.4" r="3.8"/><circle cx="947.2" cy="339.1" r="3.8"/><circle cx="952.7" cy="346.8" r="3.8"/><circle cx="948.6" cy="350.4" r="3.8"/><circle cx="956.9" cy="353.7" r="3.8"/><circle cx="963.8" cy="348.5" r="3.8"/><circle cx="937.2" cy="349.3" r="3.8"/><circle cx="927.5" cy="352.9" r="3.8"/><circle cx="928.4" cy="364.0" r="3.8"/><circle cx="842.3" cy="347.4" r="3.8"/><circle cx="853.3" cy="343.5" r="3.8"/><circle cx="867.7" cy="342.4" r="3.8"/><circle cx="877.7" cy="343.8" r="3.8"/><circle cx="759.2" cy="351.0" r="3.8"/><circle cx="784.4" cy="359.3" r="3.8"/><circle cx="828.4" cy="356.0" r="3.8"/><circle cx="882.1" cy="364.5" r="3.8"/><circle cx="913.4" cy="368.1" r="3.8"/><circle cx="818.7" cy="369.5" r="3.8"/><circle cx="827.9" cy="379.5" r="3.8"/><circle cx="864.1" cy="373.1" r="3.8"/><circle cx="867.7" cy="375.3" r="3.8"/><circle cx="760.1" cy="374.5" r="3.8"/><circle cx="960.7" cy="395.5" r="3.8"/><circle cx="767.0" cy="396.9" r="3.8"/><circle cx="724.4" cy="406.3" r="3.8"/><circle cx="763.1" cy="409.4" r="3.8"/><circle cx="772.8" cy="408.6" r="3.8"/><circle cx="859.4" cy="405.8" r="3.8"/><circle cx="892.1" cy="411.6" r="3.8"/><circle cx="757.6" cy="420.7" r="3.8"/><circle cx="752.9" cy="423.5" r="3.8"/><circle cx="755.4" cy="428.5" r="3.8"/><circle cx="822.6" cy="421.3" r="3.8"/><circle cx="825.7" cy="429.0" r="3.8"/><circle cx="897.1" cy="426.3" r="3.8"/><circle cx="849.2" cy="437.1" r="3.8"/><circle cx="891.8" cy="438.2" r="3.8"/><circle cx="831.8" cy="440.9" r="3.8"/><circle cx="932.2" cy="439.3" r="3.8"/><circle cx="956.0" cy="448.4" r="3.8"/><circle cx="784.7" cy="452.3" r="3.8"/><circle cx="844.2" cy="451.2" r="3.8"/><circle cx="808.8" cy="459.5" r="3.8"/><circle cx="916.7" cy="460.3" r="3.8"/><circle cx="920.3" cy="463.9" r="3.8"/><circle cx="752.9" cy="467.5" r="3.8"/><circle cx="866.4" cy="469.7" r="3.8"/><circle cx="947.2" cy="474.4" r="3.8"/><circle cx="845.3" cy="480.2" r="3.8"/><circle cx="831.8" cy="487.4" r="3.8"/><circle cx="870.2" cy="489.4" r="3.8"/><circle cx="903.4" cy="484.7" r="3.8"/><circle cx="908.4" cy="494.4" r="3.8"/><circle cx="929.5" cy="500.2" r="3.8"/><circle cx="971.3" cy="484.7" r="3.8"/><circle cx="971.3" cy="489.4" r="3.8"/><circle cx="782.8" cy="491.0" r="3.8"/><circle cx="796.6" cy="493.8" r="3.8"/><circle cx="822.6" cy="502.7" r="3.8"/><circle cx="794.4" cy="510.1" r="3.8"/><circle cx="976.2" cy="317.8" r="3.8"/><circle cx="1038.2" cy="333.3" r="3.8"/><circle cx="1121.3" cy="330.2" r="3.8"/><circle cx="1016.1" cy="347.4" r="3.8"/><circle cx="1014.2" cy="351.6" r="3.8"/><circle cx="1008.3" cy="355.4" r="3.8"/><circle cx="1025.2" cy="370.4" r="3.8"/><circle cx="1072.9" cy="380.1" r="3.8"/><circle cx="1169.0" cy="372.3" r="3.8"/><circle cx="1260.6" cy="385.6" r="3.8"/><circle cx="1054.3" cy="396.1" r="3.8"/><circle cx="1066.8" cy="395.0" r="3.8"/><circle cx="1106.4" cy="397.5" r="3.8"/><circle cx="1111.1" cy="403.3" r="3.8"/><circle cx="1136.3" cy="397.8" r="3.8"/><circle cx="1142.9" cy="396.7" r="3.8"/><circle cx="980.4" cy="406.9" r="3.8"/><circle cx="989.2" cy="406.7" r="3.8"/><circle cx="1013.0" cy="403.6" r="3.8"/><circle cx="1027.7" cy="407.2" r="3.8"/><circle cx="1038.8" cy="403.9" r="3.8"/><circle cx="1037.4" cy="409.2" r="3.8"/><circle cx="1038.8" cy="414.7" r="3.8"/><circle cx="1039.1" cy="420.5" r="3.8"/><circle cx="1048.2" cy="416.4" r="3.8"/><circle cx="1055.1" cy="411.4" r="3.8"/><circle cx="1067.6" cy="412.2" r="3.8"/><circle cx="1000.6" cy="417.2" r="3.8"/><circle cx="1005.6" cy="422.4" r="3.8"/><circle cx="1186.4" cy="433.0" r="3.8"/><circle cx="1193.9" cy="436.8" r="3.8"/><circle cx="1133.0" cy="437.7" r="3.8"/><circle cx="1056.0" cy="441.8" r="3.8"/><circle cx="1048.8" cy="445.2" r="3.8"/><circle cx="1052.1" cy="445.7" r="3.8"/><circle cx="1047.4" cy="450.1" r="3.8"/><circle cx="1057.6" cy="451.5" r="3.8"/><circle cx="998.4" cy="450.7" r="3.8"/><circle cx="1164.5" cy="455.4" r="3.8"/><circle cx="1184.5" cy="463.2" r="3.8"/><circle cx="1139.6" cy="465.7" r="3.8"/><circle cx="1172.0" cy="474.2" r="3.8"/><circle cx="1180.9" cy="484.8" r="3.8"/><circle cx="1251.8" cy="446.5" r="3.8"/><circle cx="1246.8" cy="450.7" r="3.8"/><circle cx="1256.5" cy="459.6" r="3.8"/><circle cx="1124.9" cy="484.5" r="3.8"/><circle cx="1151.0" cy="490.6" r="3.8"/><circle cx="1175.3" cy="492.0" r="3.8"/><circle cx="1175.9" cy="496.9" r="3.8"/><circle cx="1186.1" cy="493.1" r="3.8"/><circle cx="1172.3" cy="505.5" r="3.8"/><circle cx="1232.1" cy="496.9" r="3.8"/><circle cx="1249.5" cy="497.8" r="3.8"/><circle cx="1253.7" cy="495.0" r="3.8"/><circle cx="975.4" cy="485.3" r="3.8"/><circle cx="974.0" cy="488.9" r="3.8"/><circle cx="1052.4" cy="493.1" r="3.8"/><circle cx="1053.8" cy="497.8" r="3.8"/><circle cx="1056.2" cy="501.9" r="3.8"/><circle cx="571.8" cy="523.5" r="3.8"/><circle cx="661.7" cy="529.1" r="3.8"/><circle cx="406.7" cy="543.6" r="3.8"/><circle cx="454.6" cy="538.8" r="3.8"/><circle cx="458.5" cy="536.9" r="3.8"/><circle cx="457.6" cy="540.8" r="3.8"/><circle cx="466.8" cy="539.1" r="3.8"/><circle cx="502.2" cy="546.4" r="3.8"/><circle cx="630.5" cy="557.2" r="3.8"/><circle cx="674.2" cy="563.6" r="3.8"/><circle cx="439.5" cy="566.4" r="3.8"/><circle cx="545.6" cy="570.0" r="3.8"/><circle cx="422.0" cy="584.2" r="3.8"/><circle cx="456.0" cy="583.9" r="3.8"/><circle cx="655.3" cy="580.6" r="3.8"/><circle cx="589.9" cy="593.7" r="3.8"/><circle cx="557.0" cy="600.1" r="3.8"/><circle cx="546.2" cy="607.9" r="3.8"/><circle cx="435.1" cy="623.2" r="3.8"/><circle cx="525.8" cy="622.4" r="3.8"/><circle cx="479.6" cy="639.6" r="3.8"/><circle cx="467.1" cy="648.5" r="3.8"/><circle cx="473.8" cy="646.9" r="3.8"/><circle cx="481.8" cy="648.5" r="3.8"/><circle cx="569.0" cy="657.4" r="3.8"/><circle cx="513.0" cy="660.5" r="3.8"/><circle cx="648.6" cy="666.1" r="3.8"/><circle cx="531.1" cy="675.3" r="3.8"/><circle cx="484.1" cy="698.4" r="3.8"/><circle cx="496.3" cy="703.4" r="3.8"/><circle cx="503.0" cy="703.7" r="3.8"/><circle cx="631.3" cy="702.5" r="3.8"/><circle cx="794.2" cy="511.6" r="3.8"/><circle cx="968.2" cy="519.6" r="3.8"/><circle cx="725.7" cy="529.1" r="3.8"/><circle cx="759.7" cy="528.3" r="3.8"/><circle cx="765.0" cy="528.5" r="3.8"/><circle cx="760.2" cy="531.9" r="3.8"/><circle cx="763.6" cy="538.3" r="3.8"/><circle cx="834.6" cy="524.9" r="3.8"/><circle cx="839.3" cy="522.4" r="3.8"/><circle cx="838.2" cy="535.2" r="3.8"/><circle cx="926.7" cy="527.7" r="3.8"/><circle cx="697.0" cy="558.6" r="3.8"/><circle cx="774.7" cy="561.1" r="3.8"/><circle cx="788.3" cy="564.2" r="3.8"/><circle cx="823.7" cy="571.7" r="3.8"/><circle cx="869.1" cy="560.3" r="3.8"/><circle cx="937.6" cy="567.5" r="3.8"/><circle cx="721.2" cy="586.4" r="3.8"/><circle cx="743.2" cy="594.2" r="3.8"/><circle cx="968.2" cy="588.7" r="3.8"/><circle cx="935.3" cy="599.8" r="3.8"/><circle cx="883.5" cy="604.3" r="3.8"/><circle cx="853.5" cy="612.1" r="3.8"/><circle cx="824.2" cy="616.8" r="3.8"/><circle cx="842.9" cy="628.2" r="3.8"/><circle cx="853.8" cy="632.9" r="3.8"/><circle cx="844.3" cy="641.0" r="3.8"/><circle cx="905.0" cy="651.3" r="3.8"/><circle cx="690.3" cy="654.4" r="3.8"/><circle cx="721.2" cy="668.0" r="3.8"/><circle cx="754.4" cy="678.0" r="3.8"/><circle cx="826.2" cy="675.3" r="3.8"/><circle cx="880.2" cy="676.6" r="3.8"/><circle cx="876.6" cy="683.6" r="3.8"/><circle cx="881.9" cy="687.2" r="3.8"/><circle cx="885.2" cy="688.3" r="3.8"/><circle cx="920.9" cy="680.5" r="3.8"/><circle cx="707.0" cy="684.2" r="3.8"/><circle cx="702.3" cy="688.6" r="3.8"/><circle cx="706.5" cy="689.7" r="3.8"/><circle cx="693.1" cy="692.5" r="3.8"/><circle cx="700.9" cy="698.4" r="3.8"/><circle cx="698.1" cy="697.0" r="3.8"/><circle cx="771.9" cy="696.1" r="3.8"/><circle cx="789.4" cy="695.6" r="3.8"/><circle cx="798.4" cy="698.1" r="3.8"/><circle cx="811.7" cy="698.6" r="3.8"/><circle cx="993.5" cy="514.9" r="3.8"/><circle cx="996.3" cy="514.9" r="3.8"/><circle cx="1120.1" cy="518.0" r="3.8"/><circle cx="1122.3" cy="516.0" r="3.8"/><circle cx="1146.5" cy="524.4" r="3.8"/><circle cx="1167.4" cy="533.0" r="3.8"/><circle cx="1253.6" cy="528.3" r="3.8"/><circle cx="1259.2" cy="525.5" r="3.8"/><circle cx="1094.2" cy="537.4" r="3.8"/><circle cx="1115.6" cy="536.6" r="3.8"/><circle cx="1122.9" cy="533.3" r="3.8"/><circle cx="1129.8" cy="537.4" r="3.8"/><circle cx="1132.6" cy="536.6" r="3.8"/><circle cx="1124.3" cy="540.2" r="3.8"/><circle cx="1127.0" cy="543.8" r="3.8"/><circle cx="1113.1" cy="546.6" r="3.8"/><circle cx="1120.1" cy="551.6" r="3.8"/><circle cx="1143.2" cy="535.2" r="3.8"/><circle cx="1149.3" cy="551.3" r="3.8"/><circle cx="1127.9" cy="561.4" r="3.8"/><circle cx="1166.5" cy="565.3" r="3.8"/><circle cx="1140.4" cy="571.1" r="3.8"/><circle cx="990.4" cy="560.2" r="3.8"/><circle cx="995.7" cy="569.4" r="3.8"/><circle cx="1021.9" cy="570.3" r="3.8"/><circle cx="1018.5" cy="579.4" r="3.8"/><circle cx="1102.8" cy="575.8" r="3.8"/><circle cx="986.5" cy="588.6" r="3.8"/><circle cx="1145.1" cy="592.5" r="3.8"/><circle cx="1198.8" cy="595.9" r="3.8"/><circle cx="1077.5" cy="607.5" r="3.8"/><circle cx="996.8" cy="624.2" r="3.8"/><circle cx="986.5" cy="633.4" r="3.8"/><circle cx="1026.3" cy="636.5" r="3.8"/><circle cx="1039.7" cy="632.6" r="3.8"/><circle cx="1046.3" cy="654.9" r="3.8"/><circle cx="1053.0" cy="667.6" r="3.8"/><circle cx="1144.0" cy="658.7" r="3.8"/><circle cx="1014.6" cy="669.0" r="3.8"/><circle cx="1099.5" cy="669.9" r="3.8"/><circle cx="1097.8" cy="682.4" r="3.8"/><circle cx="1009.6" cy="687.4" r="3.8"/><circle cx="1018.8" cy="689.9" r="3.8"/><circle cx="1170.7" cy="688.5" r="3.8"/><circle cx="1171.3" cy="698.0" r="3.8"/><circle cx="1014.3" cy="706.3" r="3.8"/><circle cx="1250.3" cy="676.8" r="3.8"/><circle cx="1257.8" cy="672.4" r="3.8"/></g>
<circle cx="953" cy="136" r="2.5" fill="#fff" stroke="#555" stroke-width="1"/>
<circle cx="571" cy="512" r="2.5" fill="#fff" stroke="#555" stroke-width="1"/>
<circle cx="997" cy="578" r="2.5" fill="#fff" stroke="#555" stroke-width="1"/>
<circle cx="1191" cy="192" r="2.5" fill="#fff" stroke="#555" stroke-width="1"/>
<circle cx="661" cy="289" r="2.5" fill="#fff" stroke="#555" stroke-width="1"/>
<circle cx="900.5" cy="256" r="2.5" fill="#fff" stroke="#555" stroke-width="1"/>
<circle cx="650" cy="149" r="2.5" fill="#fff" stroke="#555" stroke-width="1"/>
<circle cx="1135" cy="436" r="2.5" fill="#fff" stroke="#555" stroke-width="1"/></g></svg><div class="a" style="left:400px;top:119px;width:7px;height:589px;background:linear-gradient(90deg,rgba(0,0,0,0.13),rgba(0,0,0,0))"></div><div class="a" style="left:415px;top:134px;width:118px;height:38px;background:#fff;box-shadow:0 1px 2px rgba(0,0,0,0.25)"></div><div class="t" style="left:425.5px;top:147.01px;font-size:14.4px;line-height:14.4px;color:#2b2b2b;font-weight:normal;letter-spacing:0.15px;"><b>11,569</b> records</div>
<div class="a" style="left:400px;top:269px;width:44px;height:176px;background:#1b4c86"></div><div class="a" style="left:400px;top:269px;width:43px;height:44px;background:#fff"></div><svg style="left:400px;top:269px" width="44" height="176" viewBox="400 269 44 176" fill="none" stroke-width="1.3">
<circle cx="421.8" cy="291" r="9.3" stroke="#1b4c86"/><path d="M421.8 288.5V296.3M419.6 296.3H424.2M419.9 288.5H421.8" stroke="#1b4c86" stroke-width="1.5"/><circle cx="421.8" cy="285.6" r="1" fill="#1b4c86" stroke="none"/>
<path d="M413.3 326.5H430.3L423.6 335.5V346.2L420 343.3V335.5Z" stroke="#fff" stroke-linejoin="round"/>
<g transform="translate(421.8 378.5) scale(0.84) translate(-421.8 -380)" stroke-width="1.5"><path d="M417 386.5H415.8A4.8 4.8 0 0 1 414.6 377.1A7.3 7.3 0 0 1 428.5 375.5A5.3 5.3 0 0 1 428.3 386.5H426.5" stroke="#fff" stroke-linecap="round"/>
<path d="M421.8 379V390.5M418.6 387.4L421.8 390.6L425 387.4" stroke="#fff" stroke-linecap="round"/></g>
<path d="M421.8 413.2L424.6 419.2L431.2 419.8L426.2 424.2L427.7 430.7L421.8 427.3L415.9 430.7L417.4 424.2L412.4 419.8L419 419.2Z" stroke="#fff" stroke-linejoin="round"/>
</svg><div class="a" style="left:1199px;top:134px;width:48px;height:48px;background:#fff;border-radius:4px;box-shadow:0 1px 3px rgba(0,0,0,0.12)"></div><div class="a" style="left:1199px;top:192px;width:48px;height:48px;background:#fff;border-radius:4px;box-shadow:0 1px 3px rgba(0,0,0,0.12)"></div><div class="a" style="left:1199px;top:250px;width:48px;height:240px;background:#fff;border-radius:4px;box-shadow:0 1px 3px rgba(0,0,0,0.12)"></div><div class="a" style="left:1199px;top:500px;width:48px;height:48px;background:#fff;border-radius:4px;box-shadow:0 1px 3px rgba(0,0,0,0.12)"></div><div class="a" style="left:1199px;top:558px;width:48px;height:144px;background:#fff;border-radius:4px;box-shadow:0 1px 3px rgba(0,0,0,0.12)"></div><svg style="left:1199px;top:134px" width="48" height="568" viewBox="1199 134 48 568" fill="none" stroke="#2b2b2b" stroke-width="1.1">
<circle cx="1221.2" cy="156.6" r="4.3"/><path d="M1224.3 159.7L1228 163.4"/>
<path d="M1219 211.5H1229M1219 216.5H1229M1219 221.5H1229"/>
<rect x="1215" y="209.8" width="2.2" height="2.2"/><rect x="1215" y="214.9" width="2.2" height="2.2"/><path d="M1215 222.3L1216.1 220.2L1217.2 222.3Z" fill="#2b2b2b"/>
<path d="M1218.8 268.2L1228.3 273.8L1223.8 274.6L1221.7 279.2Z" stroke-linejoin="round"/>
<path d="M1222.8 315Q1218.8 315 1218.8 318.8V324.5L1222.8 328.6L1226.8 324.5V318.8Q1226.8 315 1222.8 315Z" stroke-linejoin="round"/><circle cx="1222.8" cy="319.4" r="1.4"/>
<path d="M1215.8 365.5C1217.5 362 1221 362.5 1221 366C1221 369.5 1223 373.5 1226.2 371.2C1228.5 369.5 1231.2 371 1230.4 373.8C1229.6 376.4 1226.5 375.5 1225.2 373.6"/>
<path d="M1217 424Q1215.5 418 1219 414.5Q1223 411 1227 413Q1231 415.5 1230.5 421Q1230 425.5 1226 425.5Q1221 425.5 1217 424Z" fill="#c8c8c8" stroke="#2b2b2b"/>
<path d="M1222.2 462L1218.6 466L1222.2 470M1227.2 462L1223.6 466L1227.2 470"/>
<rect x="1215.3" y="517.2" width="15.4" height="13.6"/><path d="M1215.3 520.6H1230.7M1215.3 524H1230.7M1215.3 527.4H1230.7M1219.4 517.2V530.8"/>
<path d="M1223 577V587.4M1217.8 582.2H1228.2"/>
<path d="M1217.8 630.2H1228.2"/>
<path d="M1217.5 685.3V677.5L1223 671.5L1228.5 677.5V685.3H1225V680.6H1221V685.3Z" stroke-linejoin="round"/>
<path d="M1219 674.5V672.3H1220.3V673.1" />
</svg><div class="a" style="left:1258px;top:43px;width:3px;height:583px;border-radius:1.5px;background:#8c8c8c"></div><div class="a" style="left:0;top:119px;width:400px;height:589px;background:#fff"></div><div class="t" style="left:15px;top:136.62px;font-size:21px;line-height:21px;color:#222;font-weight:bold;letter-spacing:-0.1px;">Power Plants</div>
<div class="a" style="left:15px;top:168px;width:142px;height:32px;border-radius:16px;background:#dcebd8"></div><svg style="left:26px;top:176px" width="20" height="20" viewBox="26 176 20 20" fill="none" stroke="#3d7c40" stroke-width="1.2">
<circle cx="35.6" cy="184.3" r="7"/><path d="M32.2 184.4L34.7 186.9L39 182.1" stroke-linecap="round" stroke-linejoin="round"/></svg><div class="t" style="left:51px;top:176.83px;font-size:16.5px;line-height:16.5px;color:#3d7c40;font-weight:normal;letter-spacing:0.05px;">Authoritative</div>
<div class="a" style="left:15px;top:215px;width:45px;height:45px;border-radius:50%;background:#fff;border:1px solid #ececec"></div><svg style="left:15px;top:215px" width="45" height="45" viewBox="15 215 45 45" fill="none" stroke-linecap="round">
<path d="M25 231.2Q30 224 37.6 220.6" stroke="#f2c01e" stroke-width="1.7"/>
<path d="M25.8 231.2Q34 222.5 51.8 222" stroke="#4fa43c" stroke-width="1.5"/>
<path d="M26.8 231.3Q37 225 47 226.2Q57.5 228.5 54.8 241" stroke="#2d96d6" stroke-width="2.1"/>
</svg><div class="t" style="left:20.8px;top:225.34px;font-size:25px;line-height:25px;color:#1e1e1e;font-weight:normal;letter-spacing:0.6px;font-family:'Liberation Serif',serif;">eia</div>
<div class="t" style="left:75px;top:220.56px;font-size:16px;line-height:16px;color:#222;font-weight:bold;letter-spacing:-0.35px;">U.S. Energy Information Administration</div>
<div class="t" style="left:75px;top:244.26px;font-size:16px;line-height:16px;color:#222;font-weight:bold;letter-spacing:-0.2px;">(EIA.gov)</div>
<div class="t" style="left:75px;top:267.40px;font-size:16.3px;line-height:16.3px;color:#474747;font-weight:normal;letter-spacing:0.0px;">U.S. Energy Information Administration</div>
<div class="t" style="left:15px;top:315.71px;font-size:17px;line-height:17px;color:#222;font-weight:bold;letter-spacing:0.05px;">Summary</div>
<div class="t" style="left:15px;top:352.22px;font-size:16.4px;line-height:16.4px;color:#474747;font-weight:normal;letter-spacing:0.14px;">These data identify operable electric generating</div>
<div class="t" style="left:15px;top:375.92px;font-size:16.4px;line-height:16.4px;color:#474747;font-weight:normal;letter-spacing:0.0px;">plants in the United States by energy source, as of</div>
<div class="t" style="left:15px;top:399.72px;font-size:16.4px;line-height:16.4px;color:#474747;font-weight:normal;letter-spacing:0.1px;">September 2022.</div>
<div class="a" style="left:15px;top:446px;width:370px;height:38px;background:#1b4c86"></div><div class="t" style="left:15px;top:458.16px;font-size:16px;line-height:16px;color:#fff;font-weight:normal;letter-spacing:0.0px;width:370px;text-align:center;">View Full Details</div>
<div class="a" style="left:15px;top:494px;width:370px;height:38px;background:#fff;border:1px solid #1b4c86"></div><div class="t" style="left:15px;top:505.85px;font-size:16.6px;line-height:16.6px;color:#1b4c86;font-weight:normal;letter-spacing:0.1px;width:370px;text-align:center;">Download</div>
<div class="t" style="left:15px;top:558.57px;font-size:17.4px;line-height:17.4px;color:#222;font-weight:bold;letter-spacing:0.0px;">Details</div>
<svg style="left:14px;top:596px" width="28" height="28" viewBox="14 596 28 28" fill="none" stroke="#2b2b2b" stroke-width="1.3">
<ellipse cx="27.2" cy="602.9" rx="9.8" ry="3.3"/>
<path d="M17.4 602.9V614.6Q17.4 618.3 27.2 618.3Q37 618.3 37 614.6V602.9M17.4 608.7Q17.4 612 27.2 612Q37 612 37 608.7"/>
</svg><div class="t" style="left:54px;top:592.23px;font-size:15.8px;line-height:15.8px;color:#222;font-weight:bold;letter-spacing:0.0px;">Dataset</div>
<div class="t" style="left:54px;top:611.81px;font-size:15.7px;line-height:15.7px;color:#474747;font-weight:normal;letter-spacing:0.0px;">Feature Layer</div>
<svg style="left:14px;top:652px" width="28" height="20" viewBox="14 652 28 20" fill="none" stroke="#2b2b2b" stroke-width="1.3">
<circle cx="26.9" cy="664.5" r="10.5"/><path d="M26.9 661V670" stroke-width="1.6"/><circle cx="26.9" cy="658.5" r="0.6" fill="#2b2b2b"/>
</svg><div class="t" style="left:54px;top:648.18px;font-size:15.5px;line-height:15.5px;color:#222;font-weight:bold;letter-spacing:0.35px;">March 21, 2023</div>
<div class="a" style="left:0;top:668px;width:400px;height:40px;background:#1b4c86"></div><div class="t" style="left:12px;top:681.09px;font-size:16.2px;line-height:16.2px;color:#fff;font-weight:normal;letter-spacing:0.0px;">I want to use this</div>
<svg style="left:370px;top:676px" width="24" height="24" viewBox="370 676 24 24" fill="none" stroke="#fff" stroke-width="1.8">
<path d="M376.5 681.5L384 688.5L376.5 695.5"/></svg><div class="a" style="left:396px;top:121px;width:3px;height:374px;border-radius:1.5px;background:#9a9a9a"></div></body></html>
